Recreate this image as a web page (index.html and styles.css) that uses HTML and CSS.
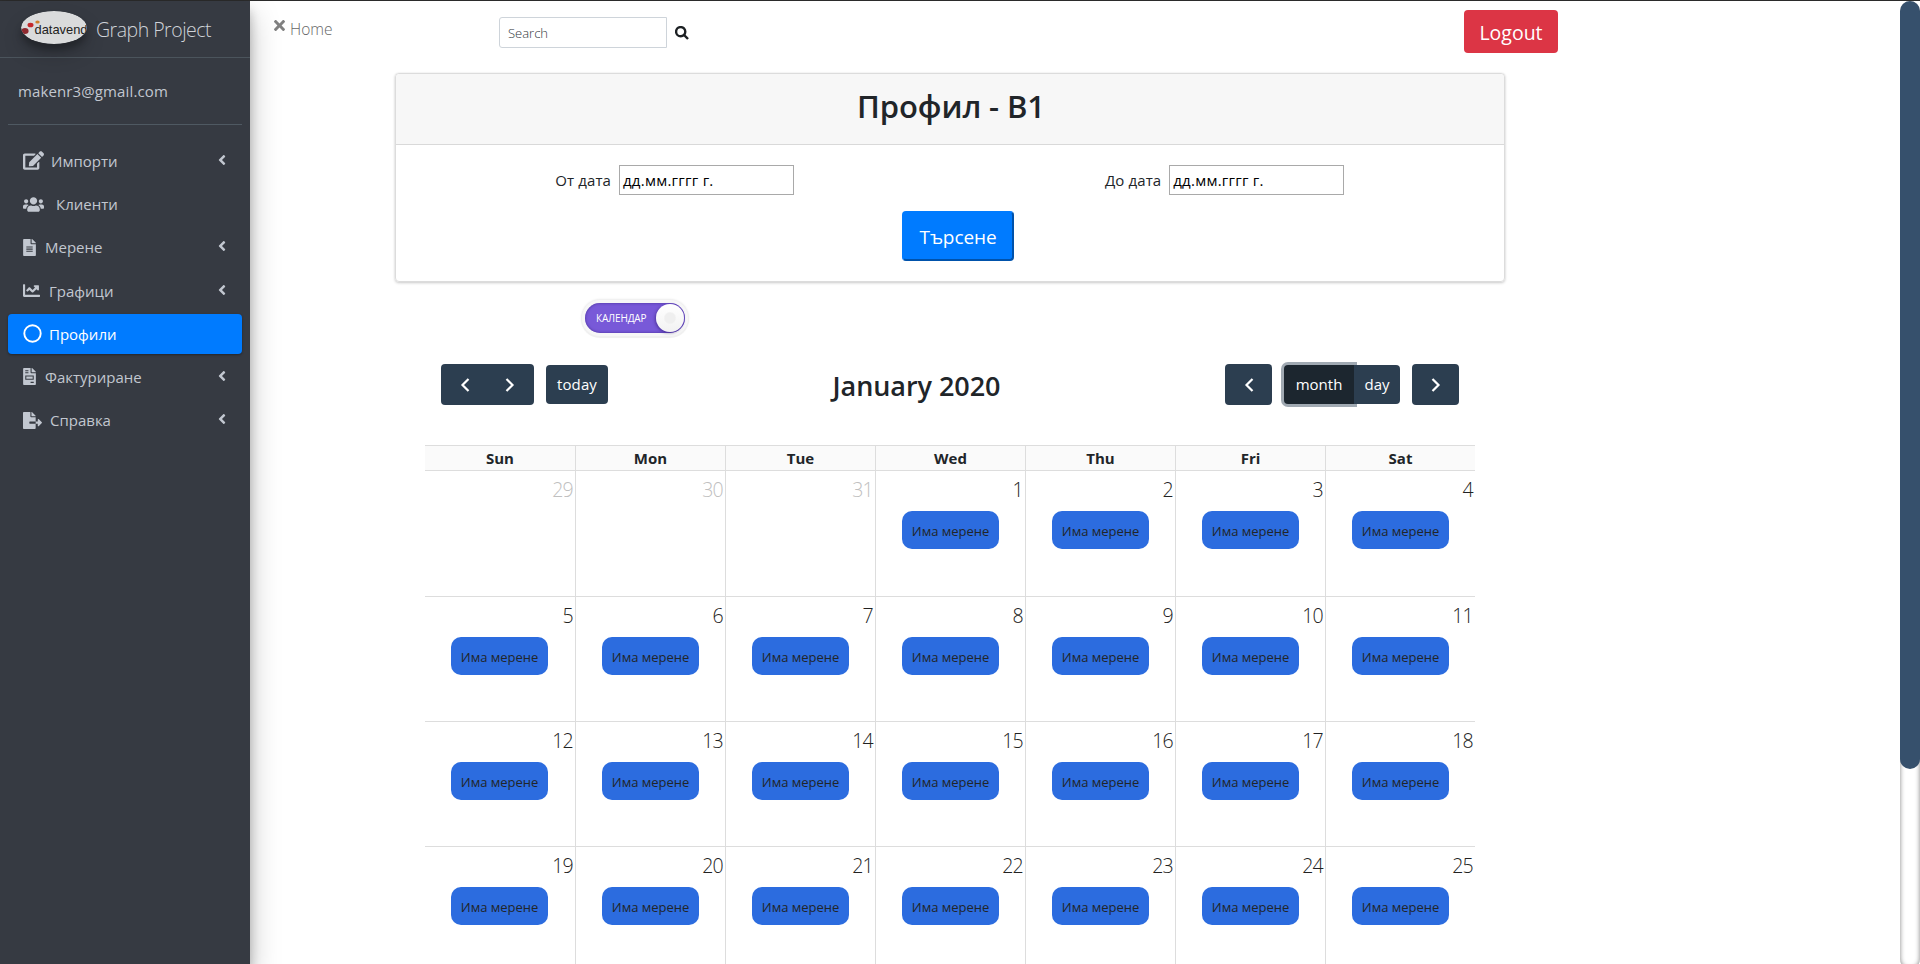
FILE: index.html
```html
<!DOCTYPE html>
<html lang="bg">
<head>
<meta charset="utf-8">
<title>Graph Project</title>
<link rel="stylesheet" href="styles.css">
</head>
<body>
<div class="app">
  <aside class="sidebar">
    <div class="brand">
      <svg class="logo" viewBox="0 0 66 33"><defs><clipPath id="oval"><ellipse cx="33" cy="16.5" rx="33" ry="16.5"/></clipPath></defs><g clip-path="url(#oval)"><rect width="66" height="33" fill="#dadbdc"/><ellipse cx="4" cy="20" rx="3.6" ry="3" fill="#8f2a30"/><ellipse cx="9.5" cy="14" rx="3" ry="2.3" fill="#c5282a"/><ellipse cx="16.5" cy="11" rx="2.2" ry="1.5" fill="#cf7f2a"/><text class="logo-text" x="13.5" y="23" textLength="53" lengthAdjust="spacingAndGlyphs">datavend</text></g></svg>
      <span class="brand-name">Graph Project</span>
    </div>
    <div class="user">makenr3@gmail.com</div>
    <nav class="nav">
      <a class="item"><svg class="i-edit" viewBox="0 0 576 512"><path d="M402.6 83.2l90.2 90.2c3.8 3.8 3.8 10 0 13.8L274.4 405.6l-92.8 10.3c-12.4 1.4-22.9-9.1-21.5-21.5l10.3-92.8L388.8 83.2c3.8-3.8 10-3.8 13.8 0zm162-22.9l-48.8-48.8c-15.2-15.2-39.9-15.2-55.2 0l-35.4 35.4c-3.8 3.8-3.8 10 0 13.8l90.2 90.2c3.8 3.8 10 3.8 13.8 0l35.4-35.4c15.2-15.3 15.2-40 0-55.2zM384 346.2V448H64V128h229.8c3.2 0 6.2-1.3 8.5-3.5l40-40c7.6-7.6 2.2-20.5-8.5-20.5H48C21.5 64 0 85.5 0 112v352c0 26.5 21.5 48 48 48h352c26.5 0 48-21.5 48-48V306.2c0-10.7-12.9-16-20.5-8.5l-40 40c-2.2 2.3-3.5 5.3-3.5 8.5z"/></svg><span>Импорти</span><svg class="angle" viewBox="0 0 256 512"><use href="#angle"/></svg></a>
      <a class="item"><svg class="i-users" viewBox="0 0 640 512"><path d="M96 224c35.300 0 64-28.700 64-64s-28.700-64-64-64-64 28.700-64 64 28.700 64 64 64zm448 0c35.300 0 64-28.700 64-64s-28.700-64-64-64-64 28.700-64 64 28.700 64 64 64zm32 32h-64c-17.600 0-33.500 7.100-45.100 18.600 40.300 22.100 68.900 62 75.100 109.400h66c17.700 0 32-14.300 32-32v-32c0-35.300-28.700-64-64-64zm-256 0c61.900 0 112-50.100 112-112S381.900 32 320 32 208 82.100 208 144s50.100 112 112 112zm76.800 32h-8.300c-20.800 10-43.900 16-68.500 16s-47.600-6-68.500-16h-8.300C179.600 288 128 339.600 128 403.200V432c0 26.500 21.500 48 48 48h288c26.500 0 48-21.500 48-48v-28.800c0-63.600-51.600-115.200-115.200-115.200zm-223.700-13.400C161.500 263.100 145.600 256 128 256H64c-35.300 0-64 28.700-64 64v32c0 17.700 14.300 32 32 32h65.900c6.300-47.400 34.900-87.300 75.200-109.400z"/></svg><span>Клиенти</span></a>
      <a class="item"><svg class="i-file" viewBox="0 0 384 512"><path fill-rule="evenodd" d="M224 136V0H24C10.700 0 0 10.700 0 24v464c0 13.300 10.700 24 24 24h336c13.300 0 24-10.700 24-24V160H248c-13.200 0-24-10.800-24-24zM96 224h192v32H96zM96 288h192v32H96zM96 352h192v32H96zM384 121.900v6.100H256V0h6.100c6.400 0 12.500 2.500 17 7l97.900 98c4.500 4.500 7 10.600 7 16.900z"/></svg><span>Мерене</span><svg class="angle" viewBox="0 0 256 512"><use href="#angle"/></svg></a>
      <a class="item"><svg class="i-chart" viewBox="0 0 512 512"><path d="M496 384H64V80c0-8.840-7.160-16-16-16H16C7.160 64 0 71.160 0 80v336c0 17.670 14.330 32 32 32h464c8.840 0 16-7.160 16-16v-32c0-8.840-7.160-16-16-16zM464 96H345.940c-21.380 0-32.090 25.850-16.970 40.970l32.400 32.400L288 242.750l-73.370-73.370c-12.500-12.500-32.760-12.500-45.250 0l-68.690 68.690c-6.250 6.250-6.250 16.380 0 22.630l22.620 22.620c6.250 6.250 16.380 6.250 22.630 0L192 237.250l73.370 73.370c12.500 12.500 32.760 12.500 45.250 0l96-96 32.400 32.400c15.120 15.120 40.970 4.410 40.970-16.970V112c.01-8.840-7.150-16-15.990-16z"/></svg><span>Графици</span><svg class="angle" viewBox="0 0 256 512"><use href="#angle"/></svg></a>
      <a class="item active"><svg class="i-circle" viewBox="0 0 19 19"><circle cx="9.500" cy="9.500" r="8.200" fill="none" stroke="#fff" stroke-width="1.900"/></svg><span>Профили</span></a>
      <a class="item"><svg class="i-file" viewBox="0 0 384 512"><path fill-rule="evenodd" d="M224 136V0H24C10.700 0 0 10.700 0 24v464c0 13.300 10.700 24 24 24h336c13.300 0 24-10.700 24-24V160H248c-13.200 0-24-10.800-24-24zM64 64h96v32H64zM64 128h96v32H64zM64 224h256v128H64zM96 256v64h192v-64zM224 416h96v32h-96zM384 121.900v6.100H256V0h6.100c6.400 0 12.500 2.500 17 7l97.900 98c4.500 4.500 7 10.600 7 16.900z"/></svg><span>Фактуриране</span><svg class="angle" viewBox="0 0 256 512"><use href="#angle"/></svg></a>
      <a class="item"><svg class="i-export" viewBox="0 0 576 512"><path d="M384 121.900c0-6.300-2.500-12.400-7-16.900L279.100 7c-4.500-4.500-10.600-7-17-7H256v128h128zM571 308l-95.700-96.400c-10.100-10.100-27.400-3-27.400 11.300V288h-64v64h64v65.200c0 14.300 17.300 21.400 27.400 11.300L571 332c6.600-6.600 6.600-17.400 0-24zm-379 28v-32c0-8.800 7.200-16 16-16h176V160H248c-13.200 0-24-10.800-24-24V0H24C10.700 0 0 10.700 0 24v464c0 13.300 10.700 24 24 24h336c13.300 0 24-10.700 24-24V352H208c-8.800 0-16-7.200-16-16z"/></svg><span>Справка</span><svg class="angle" viewBox="0 0 256 512"><path id="angle" d="M31.700 239l136-136c9.400-9.400 24.600-9.400 33.900 0l22.600 22.600c9.400 9.400 9.400 24.600 0 33.900L127.900 256l96.400 96.400c9.400 9.400 9.400 24.600 0 33.900L201.700 409c-9.400 9.400-24.600 9.400-33.900 0l-136-136c-9.500-9.400-9.500-24.600-.1-34z"/></svg></a>
    </nav>
  </aside>

  <main class="main">
    <header class="topbar">
      <svg class="times" viewBox="0 80 352 352"><path d="M242.720 256l100.070-100.070c12.280-12.280 12.280-32.190 0-44.480l-22.240-22.240c-12.280-12.280-32.190-12.280-44.480 0L176 189.280 75.930 89.210c-12.280-12.280-32.190-12.280-44.480 0L9.210 111.450c-12.280 12.280-12.280 32.190 0 44.480L109.280 256 9.210 356.070c-12.280 12.280-12.280 32.190 0 44.480l22.240 22.240c12.280 12.280 32.200 12.280 44.480 0L176 322.720l100.070 100.070c12.280 12.280 32.200 12.280 44.480 0l22.240-22.240c12.280-12.280 12.280-32.190 0-44.480L242.720 256z"/></svg>
      <a class="home">Home</a>
      <div class="search">Search</div>
      <svg class="glass" viewBox="0 0 14 14"><circle cx="5.700" cy="5.700" r="4.600"/><path d="M9.200 9.200L13 13"/></svg>
      <button class="logout">Logout</button>
    </header>

    <section class="card">
      <h2 class="card-title">Профил - B1</h2>
      <div class="card-body">
        <div class="dates">
          <label class="field"><span>От дата</span><span class="date">дд.мм.гггг г.</span></label>
          <label class="field"><span>До дата</span><span class="date">дд.мм.гггг г.</span></label>
        </div>
        <button class="submit">Търсене</button>
      </div>
    </section>

    <div class="toggle"><span class="toggle-text">КАЛЕНДАР</span><span class="knob"></span></div>

    <section class="calendar">
      <div class="toolbar">
        <div class="group">
          <div class="btn pair"><svg class="chev" viewBox="0 0 10 14"><path d="M8.500 1L2.500 7L8.500 13"/></svg><svg class="chev" viewBox="0 0 10 14"><path d="M1.500 1L7.500 7L1.500 13"/></svg></div>
          <div class="btn today">today</div>
        </div>
        <h2 class="month-title">January 2020</h2>
        <div class="group">
          <div class="btn arrow"><svg class="chev" viewBox="0 0 10 14"><path d="M8.500 1L2.500 7L8.500 13"/></svg></div>
          <div class="views"><div class="btn month">month</div><div class="btn day">day</div></div>
          <div class="btn arrow"><svg class="chev" viewBox="0 0 10 14"><path d="M1.500 1L7.500 7L1.500 13"/></svg></div>
        </div>
      </div>
      <div class="week head"><div>Sun</div><div>Mon</div><div>Tue</div><div>Wed</div><div>Thu</div><div>Fri</div><div>Sat</div></div>
      <div class="week first">
        <div class="cell other"><b>29</b></div><div class="cell other"><b>30</b></div><div class="cell other"><b>31</b></div>
        <div class="cell"><b>1</b><i>Има мерене</i></div><div class="cell"><b>2</b><i>Има мерене</i></div><div class="cell"><b>3</b><i>Има мерене</i></div><div class="cell"><b>4</b><i>Има мерене</i></div>
      </div>
      <div class="week">
        <div class="cell"><b>5</b><i>Има мерене</i></div><div class="cell"><b>6</b><i>Има мерене</i></div><div class="cell"><b>7</b><i>Има мерене</i></div><div class="cell"><b>8</b><i>Има мерене</i></div><div class="cell"><b>9</b><i>Има мерене</i></div><div class="cell"><b>10</b><i>Има мерене</i></div><div class="cell"><b>11</b><i>Има мерене</i></div>
      </div>
      <div class="week">
        <div class="cell"><b>12</b><i>Има мерене</i></div><div class="cell"><b>13</b><i>Има мерене</i></div><div class="cell"><b>14</b><i>Има мерене</i></div><div class="cell"><b>15</b><i>Има мерене</i></div><div class="cell"><b>16</b><i>Има мерене</i></div><div class="cell"><b>17</b><i>Има мерене</i></div><div class="cell"><b>18</b><i>Има мерене</i></div>
      </div>
      <div class="week">
        <div class="cell"><b>19</b><i>Има мерене</i></div><div class="cell"><b>20</b><i>Има мерене</i></div><div class="cell"><b>21</b><i>Има мерене</i></div><div class="cell"><b>22</b><i>Има мерене</i></div><div class="cell"><b>23</b><i>Има мерене</i></div><div class="cell"><b>24</b><i>Има мерене</i></div><div class="cell"><b>25</b><i>Има мерене</i></div>
      </div>
    </section>
  </main>
  <div class="scroll"><div class="thumb"></div></div>
</div>
</body>
</html>
```

FILE: styles.css
```css
* { box-sizing: border-box; }
body {
  margin: 0;
  height: 964px;
  overflow: hidden;
  background: #fff;
  color: #212529;
  font-family: "Open Sans", "Noto Sans", sans-serif;
  font-size: 15px;
}
h2 { margin: 0; font-weight: 600; }
button { font-family: inherit; padding: 0; }
svg { display: block; flex: none; }

.app { display: flex; height: 964px; border-top: 1px solid #2b2b2b; }

/* Sidebar */
.sidebar {
  position: relative;
  z-index: 1;
  width: 250px;
  flex: none;
  background: #363a42;
  color: #c2c7d0;
  box-shadow: 0 14px 28px rgba(0,0,0,.25), 0 10px 10px rgba(0,0,0,.22);
}
.brand { display: flex; height: 57px; padding: 10px 0 0 21px; border-bottom: 1px solid #4b545c; }
.logo { width: 66px; height: 33px; border-radius: 50%; box-shadow: 0 10px 20px rgba(0,0,0,.19), 0 6px 6px rgba(0,0,0,.23); }
.logo-text { font: 13.5px "Liberation Sans", Arial, sans-serif; fill: #222; }
.brand-name { margin: 4px 0 0 9px; font-size: 19.5px; line-height: 30px; font-weight: 300; letter-spacing: -.5px; color: #d0d3d8; }
.user { height: 67px; margin: 0 8px; padding: 21px 0 0 10px; line-height: 24px; letter-spacing: .12px; border-bottom: 1px solid #4f5962; }
.nav { display: flex; flex-direction: column; gap: 3.2px; padding: 16px 8px 0; }
.item { display: flex; align-items: center; height: 40px; padding: 0 16px 0 15px; border-radius: 4px; }
.item svg { fill: currentColor; }
.item span { line-height: 24px; }
.active { background: #007bff; color: #fff; box-shadow: 0 1px 3px rgba(0,0,0,.12), 0 1px 2px rgba(0,0,0,.24); }
.item .angle { width: 8px; height: 16px; margin: 0 0 2px auto; }
.i-edit { width: 21px; height: 19px; margin: 0 7px 2px 0; }
.i-users { width: 21px; height: 17px; margin: 0 12px 0 0; }
.i-file { width: 13px; height: 17px; margin: 0 9px 0 0; }
.i-chart { width: 17px; height: 17px; margin: 0 9px 1px 0; }
.i-circle { width: 19px; height: 19px; margin: 0 7px 1px 0; }
.i-export { width: 19px; height: 17px; margin: 0 8px 0 0; }

/* Top bar */
.main { width: 1650px; flex: none; }
.topbar { display: flex; align-items: flex-start; height: 72px; }
.times { width: 11px; height: 11px; margin: 19px 5px 0 24px; fill: #808080; }
.home { width: 209px; margin-top: 16px; line-height: 24px; font-size: 15.5px; font-weight: 300; color: #666; }
.search {
  width: 168px;
  height: 31px;
  margin-top: 16px;
  padding: 0 8px;
  border: 1px solid #ced4da;
  border-radius: 3px 0 0 3px;
  font-size: 13px;
  font-weight: 300;
  line-height: 31px;
  color: #30363b;
}
.glass { width: 14px; height: 14px; margin: 25px 0 0 8px; fill: none; stroke: #1d2124; stroke-width: 2.4; }
.logout { width: 94px; height: 43px; margin: 9px 0 0 775px; padding-top: 3px; border: 0; border-radius: 4px; background: #dc3545; color: #fff; font-size: 19.5px; line-height: 40px; }

/* Search card */
.card {
  width: 1110px;
  height: 209px;
  margin-left: 145px;
  border: 1px solid #dcdcdc;
  border-radius: 4px;
  box-shadow: 0 0 1px rgba(0,0,0,.125), 0 1px 3px rgba(0,0,0,.2);
}
.card-title { height: 71px; padding-left: 2px; background: #f7f7f7; border-bottom: 1px solid #d9d9d9; font-size: 31px; line-height: 64px; letter-spacing: -.1px; text-align: center; border-radius: 4px 4px 0 0; }
.card-body { padding-top: 20px; }
.dates { display: flex; padding-left: 159px; gap: 311px; }
.field { display: flex; width: 239px; justify-content: flex-end; align-items: center; gap: 8px; font-size: 15px; letter-spacing: .1px; white-space: nowrap; }
.date { width: 175px; height: 30px; padding-left: 3px; border: 1px solid #a9a9a9; letter-spacing: .25px; line-height: 29px; color: #000; }
.submit { display: block; width: 112px; height: 50px; margin: 16px 0 0 506px; padding-top: 2px; border: 2px outset #007bff; border-radius: 4px; background: #007bff; color: #fff; font-size: 19px; letter-spacing: -.1px; }

/* View switch */
.toggle {
  display: flex;
  align-items: center;
  width: 100px;
  height: 30px;
  margin: 21px 0 0 335px;
  padding-left: 11px;
  border-radius: 15px;
  background: #7859d8;
  box-shadow: inset 0 0 3px #472f96, 0 0 0 3px #f7f7f7, 0 1px 0 4px #f0f0f0, 0 0 2px 4px #ececec;
}
.toggle-text { width: 60px; color: #fff; font-size: 10px; letter-spacing: -.15px; }
.knob { width: 28px; height: 28px; border-radius: 50%; background: radial-gradient(circle, #efefef 0 5px, transparent 6.500px), linear-gradient(#fff, #f2f2f2); box-shadow: -1px 1px 3px rgba(40,20,100,.5); }

/* Calendar */
.calendar { width: 1050px; margin: 30px 0 0 175px; }
.toolbar { display: flex; justify-content: space-between; align-items: center; height: 82px; padding: 1px 16px 40px 16px; }
.group { display: flex; align-items: center; gap: 12px; }
.btn { display: flex; align-items: center; justify-content: center; background: #2c3e50; color: #fff; border-radius: 4px; height: 39px; line-height: 24px; }
.pair { width: 93px; height: 41px; gap: 35px; }
.arrow { width: 47px; height: 41px; }
.today { width: 62px; padding-bottom: 2px; letter-spacing: .1px; }
.views { display: flex; }
.month { width: 70px; padding-bottom: 2px; border-radius: 4px 0 0 4px; background: #1c262f; box-shadow: 0 0 0 3px #a0a9b2; }
.day { position: relative; width: 46px; padding-bottom: 2px; border-radius: 0 4px 4px 0; }
.chev { width: 10px; height: 14px; fill: none; stroke: #fff; stroke-width: 2.200; }
.month-title { font-size: 27px; line-height: 40px; padding-top: 2px; letter-spacing: -.05px; white-space: nowrap; }

.week { display: grid; grid-template-columns: repeat(7, 150px); height: 125px; border-bottom: 1px solid #ddd; }
.week > div { border-left: 1px solid #ddd; }
.week > div:first-child { border-left: 0; }
.head { height: 26px; background: #fafafa; border-top: 1px solid #ddd; font-weight: 700; font-size: 15px; line-height: 25px; text-align: center; }
.first { height: 126px; }
.cell { display: flex; flex-direction: column; align-items: center; }
.cell b { align-self: flex-end; height: 40px; padding: 4px 2px 0 0; font-size: 19.5px; font-weight: 300; line-height: 30px; letter-spacing: -.7px; color: #222; }
.cell i { width: 97px; height: 38px; border-radius: 10px; background: #2c6cdf; font-style: normal; font-size: 13px; line-height: 40px; letter-spacing: -.02px; text-align: center; }
.cell:first-child i { margin-right: 1px; }
.other b { color: #c0c0c0; }

/* Page scrollbar */
.scroll { width: 20px; height: 968px; border-radius: 10px; box-shadow: inset 0 0 5px #808080; }
.thumb { height: 768px; border-radius: 10px; background: #36506c; }
```
